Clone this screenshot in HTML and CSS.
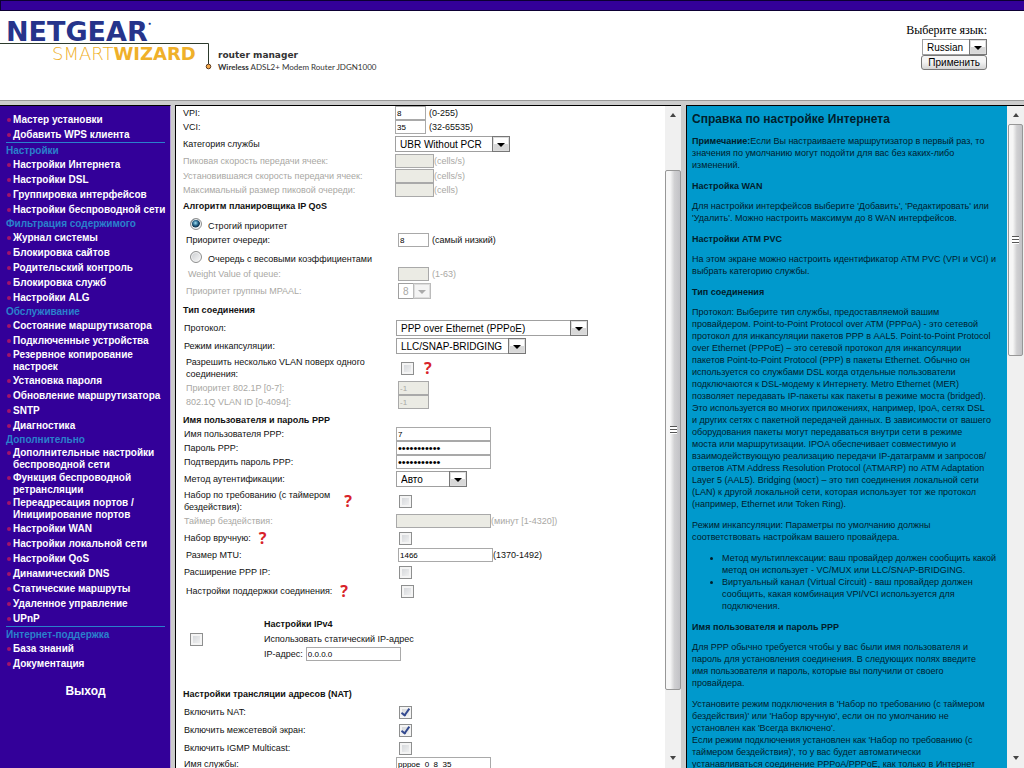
FILE: index.html
```html
<!DOCTYPE html>
<html lang="ru">
<head>
<meta charset="utf-8">
<title>NETGEAR Router JDGN1000</title>
<link rel="stylesheet" href="styles.css">
</head>
<body>
<header class="top">
  <div class="strip"></div>
  <div class="brand-row">
    <div class="brand">
      <div class="logo">
        <div class="netgear">NETGEAR<sup>•</sup></div>
        <div class="wizard">SMART<b>WIZARD</b></div>
        <svg class="logo-line" width="216" height="30" viewBox="0 0 216 30"><path d="M0 1.5H208.500V22" fill="none" stroke="#2c3a2c"/><circle cx="208.500" cy="24.500" r="2.300" fill="#f5a94a" stroke="#5a3a20"/></svg>
      </div>
      <div class="product">
        <div class="manager">router manager</div>
        <div class="model"><b>Wireless</b> ADSL2+ Modem Router JDGN1000</div>
      </div>
    </div>
    <form class="lang">
      <label for="lang">Выберите язык:</label>
      <span class="sel"><select id="lang"><option>Russian</option></select></span>
      <button type="button">Применить</button>
    </form>
  </div>
</header>
<div class="frames">
  <nav class="side">
    <ul>
      <li><a href="#">Мастер установки</a></li>
      <li><a href="#">Добавить WPS клиента</a></li>
    </ul>
    <h2 class="ruled">Настройки</h2>
    <ul>
      <li><a href="#">Настройки Интернета</a></li>
      <li><a href="#">Настройки DSL</a></li>
      <li><a href="#">Группировка интерфейсов</a></li>
      <li><a href="#">Настройки беспроводной сети</a></li>
    </ul>
    <h2>Фильтрация содержимого</h2>
    <ul>
      <li><a href="#">Журнал системы</a></li>
      <li><a href="#">Блокировка сайтов</a></li>
      <li><a href="#">Родительский контроль</a></li>
      <li><a href="#">Блокировка служб</a></li>
      <li><a href="#">Настройки ALG</a></li>
    </ul>
    <h2>Обслуживание</h2>
    <ul>
      <li><a href="#">Состояние маршрутизатора</a></li>
      <li><a href="#">Подключенные устройства</a></li>
      <li class="two"><a href="#">Резервное копирование<br>настроек</a></li>
      <li><a href="#">Установка пароля</a></li>
      <li><a href="#">Обновление маршрутизатора</a></li>
      <li><a href="#">SNTP</a></li>
      <li><a href="#">Диагностика</a></li>
    </ul>
    <h2>Дополнительно</h2>
    <ul>
      <li class="two"><a href="#">Дополнительные настройки<br>беспроводной сети</a></li>
      <li class="two"><a href="#">Функция беспроводной<br>ретрансляции</a></li>
      <li class="two"><a href="#">Переадресация портов /<br>Инициирование портов</a></li>
      <li><a href="#">Настройки WAN</a></li>
      <li><a href="#">Настройки локальной сети</a></li>
      <li><a href="#">Настройки QoS</a></li>
      <li><a href="#">Динамический DNS</a></li>
      <li><a href="#">Статические маршруты</a></li>
      <li><a href="#">Удаленное управление</a></li>
      <li><a href="#">UPnP</a></li>
    </ul>
    <h2 class="ruled">Интернет-поддержка</h2>
    <ul>
      <li><a href="#">База знаний</a></li>
      <li><a href="#">Документация</a></li>
    </ul>
    <a class="exit" href="#">Выход</a>
  </nav>
  <main class="main">
    <form class="form">
      <div class="row h14"><label for="vpi">VPI:</label><div><input id="vpi" class="s" value="8"><span class="u">(0-255)</span></div></div>
      <div class="row h14"><label for="vci">VCI:</label><div><input id="vci" class="s" value="35"><span class="u">(32-65535)</span></div></div>
      <div class="row h20"><label for="cat">Категория службы</label><div><span class="sel w115"><select id="cat"><option>UBR Without PCR</option></select></span></div></div>
      <div class="row h14 off"><label for="pcr">Пиковая скорость передачи ячеек:</label><div><input id="pcr" class="m" disabled>(cells/s)</div></div>
      <div class="row h15 off"><label for="scr">Установившаяся скорость передачи ячеек:</label><div><input id="scr" class="m" disabled>(cells/s)</div></div>
      <div class="row h14 off"><label for="mbs">Максимальный размер пиковой очереди:</label><div><input id="mbs" class="m" disabled>(cells)</div></div>
      <h3 class="h18">Алгоритм планировщика IP QoS</h3>
      <div class="choice h18"><input type="radio" name="qos" id="q1" checked><label for="q1">Строгий приоритет</label></div>
      <div class="row in h14"><label for="qp">Приоритет очереди:</label><div><input id="qp" class="s" value="8"><span class="u">(самый низкий)</span></div></div>
      <div class="choice h20"><input type="radio" name="qos" id="q2"><label for="q2">Очередь с весовыми коэффициентами</label></div>
      <div class="row in h14 off"><label class="deep" for="wv">Weight Value of queue:</label><div><input id="wv" class="s" disabled><span class="u">(1-63)</span></div></div>
      <div class="row in h20 off"><label for="mp">Приоритет группны MPAAL:</label><div><span class="sel w33"><select id="mp" disabled><option>8</option></select></span></div></div>
      <h3 class="h18">Тип соединения</h3>
      <div class="row mid h18"><label for="proto">Протокол:</label><div><span class="sel w192"><select id="proto"><option>PPP over Ethernet (PPPoE)</option></select></span></div></div>
      <div class="row mid h18"><label for="enc">Режим инкапсуляции:</label><div><span class="sel w130"><select id="enc"><option>LLC/SNAP-BRIDGING</option></select></span></div></div>
      <div class="row in h26"><label for="vlan">Разрешить несколько VLAN поверх одного<br>соединения:</label><div><input type="checkbox" id="vlan"><span class="q">?</span></div></div>
      <div class="row in h14 off"><label for="p8">Приоритет 802.1P [0-7]:</label><div><input id="p8" class="s" value="-1" disabled></div></div>
      <div class="row in h14 off"><label for="vid">802.1Q VLAN ID [0-4094]:</label><div><input id="vid" class="s" value="-1" disabled></div></div>
      <h3 class="h18 low">Имя пользователя и пароль PPP</h3>
      <div class="row mid h14"><label for="user">Имя пользователя PPP:</label><div><input id="user" class="l" value="7"></div></div>
      <div class="row mid h14"><label for="pw">Пароль PPP:</label><div><input type="password" id="pw" class="l" value="passwordppp"></div></div>
      <div class="row mid h14"><label for="pw2">Подтвердить пароль PPP:</label><div><input type="password" id="pw2" class="l" value="passwordppp"></div></div>
      <div class="row mid h20"><label for="auth">Метод аутентификации:</label><div><span class="sel w71"><select id="auth"><option>Авто</option></select></span></div></div>
      <div class="row mid h24"><div class="lab"><label for="dod">Набор по требованию (с таймером<br>бездействия):</label><span class="q">?</span></div><div><input type="checkbox" id="dod"></div></div>
      <div class="row mid h15 off"><label for="idle">Таймер бездействия:</label><div><input id="idle" class="l" disabled>(минут [1-4320])</div></div>
      <div class="row mid h20"><div class="lab near"><label for="man">Набор вручную:</label><span class="q">?</span></div><div><input type="checkbox" id="man"></div></div>
      <div class="row in h14"><label for="mtu">Размер MTU:</label><div><input id="mtu" class="l" value="1466">(1370-1492)</div></div>
      <div class="row mid h20"><label for="ext">Расширение PPP IP:</label><div><input type="checkbox" id="ext"></div></div>
      <div class="row in h18"><div class="lab near"><label for="keep">Настройки поддержки соединения:</label><span class="q">?</span></div><div><input type="checkbox" id="keep"></div></div>
      <div class="static">
        <input type="checkbox" id="st">
        <div class="static-body">
          <h3>Настройки IPv4</h3>
          <label for="st">Использовать статический IP-адрес</label>
          <div class="ip"><label for="ip">IP-адрес:</label><input id="ip" class="l" value="0.0.0.0"></div>
        </div>
      </div>
      <h3 class="h18">Настройки трансляции адресов (NAT)</h3>
      <div class="row mid h18"><label for="nat">Включить NAT:</label><div><input type="checkbox" id="nat" checked></div></div>
      <div class="row mid h18"><label for="fw">Включить межсетевой экран:</label><div><input type="checkbox" id="fw" checked></div></div>
      <div class="row mid h18"><label for="igmp">Включить IGMP Multicast:</label><div><input type="checkbox" id="igmp"></div></div>
      <div class="row mid h14"><label for="svc">Имя службы:</label><div><input id="svc" class="l" value="pppoe_0_8_35"></div></div>
    </form>
    <div class="bar"><i class="up"></i><div class="track main-track"><div class="thumb"><i></i></div></div><i class="down"></i></div>
  </main>
  <aside class="help">
    <div class="help-text">
      <h1>Справка по настройке Интернета</h1>
      <p><b>Примечание:</b>Если Вы настраиваете маршрутизатор в первый раз, то<br>значения по умолчанию могут подойти для вас без каких-либо<br>изменений.</p>
      <h4>Настройка WAN</h4>
      <p>Для настройки интерфейсов выберите 'Добавить', 'Редактировать' или<br>'Удалить'. Можно настроить максимум до 8 WAN интерфейсов.</p>
      <h4>Настройки ATM PVC</h4>
      <p>На этом экране можно настроить идентификатор ATM PVC (VPI и VCI) и<br>выбрать категорию службы.</p>
      <h4>Тип соединения</h4>
      <p>Протокол: Выберите тип службы, предоставляемой вашим<br>провайдером. Point-to-Point Protocol over ATM (PPPoA) - это сетевой<br>протокол для инкапсуляции пакетов PPP в AAL5. Point-to-Point Protocol<br>over Ethernet (PPPoE) – это сетевой протокол для инкапсуляции<br>пакетов Point-to-Point Protocol (PPP) в пакеты Ethernet. Обычно он<br>используется со службами DSL когда отдельные пользователи<br>подключаются к DSL-модему к Интернету. Metro Ethernet (MER)<br>позволяет передавать IP-пакеты как пакеты в режиме моста (bridged).<br>Это используется во многих приложениях, например, IpoA, сетях DSL<br>и других сетях с пакетной передачей данных. В зависимости от вашего<br>оборудования пакеты могут передаваться внутри сети в режиме<br>моста или маршрутизации. IPOA обеспечивает совместимую и<br>взаимодействующую реализацию передачи IP-датаграмм и запросов/<br>ответов ATM Address Resolution Protocol (ATMARP) по ATM Adaptation<br>Layer 5 (AAL5). Bridging (мост) – это тип соединения локальной сети<br>(LAN) к другой локальной сети, которая использует тот же протокол<br>(например, Ethernet или Token Ring).</p>
      <p>Режим инкапсуляции: Параметры по умолчанию должны<br>соответствовать настройкам вашего провайдера.</p>
      <ul>
        <li>Метод мультиплексации: ваш провайдер должен сообщить какой<br>метод он использует - VC/MUX или LLC/SNAP-BRIDGING.</li>
        <li>Виртуальный канал (Virtual Circuit) - ваш провайдер должен<br>сообщить, какая комбинация VPI/VCI используется для<br>подключения.</li>
      </ul>
      <h4>Имя пользователя и пароль PPP</h4>
      <p>Для PPP обычно требуется чтобы у вас были имя пользователя и<br>пароль для установления соединения. В следующих полях введите<br>имя пользователя и пароль, которые вы получили от своего<br>провайдера.</p>
      <p>Установите режим подключения в 'Набор по требованию (с таймером<br>бездействия)' или 'Набор вручную', если он по умолчанию не<br>установлен как 'Всегда включено'.<br>Если режим подключения установлен как 'Набор по требованию (с<br>таймером бездействия)', то у вас будет автоматически<br>устанавливаться соединение PPPoA/PPPoE, как только в Интернет</p>
    </div>
    <div class="bar"><i class="up"></i><div class="track help-track"><div class="thumb"><i></i></div></div><i class="down"></i></div>
  </aside>
</div>
</body>
</html>
```
FILE: styles.css
```css
*, *::before, *::after { box-sizing: border-box; }
body {
  margin: 0;
  height: 100vh;
  overflow: hidden;
  display: flex;
  flex-direction: column;
  background: #fff;
  color: #111;
  font: 9px/12px "Liberation Sans", Arial, sans-serif;
}
h1, h2, h3, h4, p, ul { margin: 0; padding: 0; }

/* header */
.top { flex: none; height: 100px; }
.strip { height: 11px; background: #309; border: 1px solid #0c0033; border-right: 0; }
.brand-row { display: flex; justify-content: space-between; padding-right: 37px; }
.brand { display: flex; }
.logo { position: relative; width: 218px; height: 64px; padding-left: 6px; }
.netgear { display: flex; padding-top: 7px; color: #26348b; font: bold 27px/28px "DejaVu Sans", sans-serif; }
.netgear sup { font-size: 6px; line-height: 12px; }
.wizard { padding-left: 46px; color: #efb02a; font: 18px/16px "DejaVu Sans", sans-serif; font-weight: 200; }
.wizard b { font-weight: 700; }
.logo-line { position: absolute; left: 0; top: 31px; }
.product { padding-top: 38px; color: #333; }
.manager { font: bold 9px/12px "DejaVu Sans", sans-serif; }
.model { font: 8px/12px Lato, sans-serif; }
.lang { display: flex; flex-direction: column; align-items: flex-end; padding-top: 11px; }
.lang label { font: 12px/17px "Liberation Serif", serif; color: #000; }
.lang button {
  height: 15px; padding: 0 6px;
  border: 1px solid #777; border-radius: 3px;
  background: linear-gradient(#f4f4f4 45%, #d4d4d4);
  font: 10px/12px "Liberation Sans", sans-serif;
}

/* controls */
input, select, button { margin: 0; color: #000; }
.sel { position: relative; display: flex; height: 16px; }
.sel select {
  appearance: none; width: 100%; height: 16px; padding: 1px 22px 0 4px;
  border: 1px solid #a0a0a0; border-radius: 0; background: #fff;
  font: 10px/13px "Liberation Sans", sans-serif; opacity: 1;
}
.sel::before {
  content: ""; position: absolute; right: 0; top: 0; width: 18px; height: 16px;
  border: 1px solid #777; box-shadow: inset 0 0 0 1px #ddd;
  background: linear-gradient(#fff 50%, #d8d8d8 50%); pointer-events: none;
}
.sel::after {
  content: ""; position: absolute; right: 5px; top: 7px;
  border: 4px solid transparent; border-top-color: #000; border-bottom: 0; pointer-events: none;
}
.off .sel select { color: #a9a8a4; padding-right: 18px; }
.off .sel::before { border-color: #bbb; background: #f4f4f4; }
.off .sel::after { border-top-color: #aaa; }
.w33 { width: 33px; }
.w71 { width: 71px; }
.w115 { width: 115px; }
.w130 { width: 130px; }
.w192 { width: 192px; }
.s, .m, .l {
  height: 14px; padding: 0 1px; border: 1px solid #a9a9a9; border-radius: 0;
  background: #fff; font: 8px/12px "Liberation Sans", sans-serif;
}
.s { width: 31px; }
.m { width: 39px; }
.l { width: 95px; }
.l[type=password] { font-size: 11px; }
.s:disabled, .m:disabled, .l:disabled { background: #ebebe4; color: #a9a8a4; }
.u { padding-left: 3px; }
input[type=checkbox] {
  appearance: none; width: 13px; height: 13px; margin-left: 3px;
  border: 1px solid #8e8f8f; background: linear-gradient(135deg, #cfd2d6, #f6f6f6);
  box-shadow: inset 0 0 0 2px #f4f4f4; display: grid; place-items: center;
}
input[type=checkbox]:checked::after {
  content: ""; width: 5px; height: 9px; margin-bottom: 2px;
  border: solid #33498f; border-width: 0 2px 2px 0; transform: rotate(35deg);
}
input[type=radio] {
  appearance: none; width: 12px; height: 12px; border: 1px solid #8e8f8f; border-radius: 50%;
  background: linear-gradient(135deg, #c8cbce, #fafafa); box-shadow: inset 0 0 0 1px #f4f4f4;
}
input[type=radio]:checked { background: radial-gradient(circle at 45% 40%, #9fe0f5 0, #1c5a80 35%, #12344f 50%, #e8eef2 60%); }

/* frames */
.frames { flex: 1; min-height: 0; display: flex; border-top: 1px solid #999; background: #ccc; }
.side, .main, .help { margin-top: 4px; border-top: 1px solid #000; }
.side { flex: none; width: 171px; padding: 6px 0 0 6px; background: #309; border-right: 1px solid #b39ddb; overflow: hidden; }
.main { flex: 1; min-width: 0; display: flex; margin-left: 4px; border-left: 1px solid #000; background: #fff; }
.help { flex: none; width: 33%; display: flex; margin-left: 5px; border-left: 1px solid #000; background: #09c; }

/* sidebar */
.side ul { list-style: none; }
.side li { display: flex; align-items: center; height: 15px; white-space: nowrap; }
.side li.two { height: 25px; }
.side li::before { content: ""; flex: none; width: 4px; height: 4px; margin: 0 2px 0 1px; border-radius: 50%; background: #a3126b; }
.side li.two::before { margin-bottom: 11px; }
.side a { color: #fff; font-weight: bold; font-size: 10px; text-decoration: none; }
.side h2 { height: 13px; color: #2a80cc; font-size: 10px; line-height: 13px; }
.side .ruled { height: 15px; margin-right: 5px; padding-top: 1px; border-top: 1px solid #2a80cc; }
.side .exit { display: block; padding: 13px 5px 0 0; font-size: 12px; line-height: 14px; text-align: center; }

/* form */
.form { flex: 1; min-width: 0; overflow: hidden; padding-left: 7px; }
.row { display: grid; grid-template-columns: 212px 1fr; align-items: center; white-space: nowrap; }
.row > div { display: flex; align-items: center; }
.row.mid { padding-left: 1px; }
.row.in { padding-left: 3px; }
.deep { padding-left: 2px; }
.off { color: #a9a8a4; }
.h14 { height: 14px; }
.h15 { height: 15px; }
.h18 { height: 18px; }
.h20 { height: 20px; }
.h24 { height: 24px; }
.h26 { height: 26px; }
.form h3 { font-size: 9px; line-height: 18px; }
.form .low { line-height: 22px; }
.choice { display: flex; align-items: center; gap: 6px; padding-left: 7px; }
.choice label { padding-top: 4px; }
.q { color: #d8232a; font: bold 16px/16px "Noto Sans", sans-serif; padding-left: 10px; }
.lab .q { padding-left: 14px; }
.lab.near .q { padding-left: 8px; }
.static { display: flex; align-items: center; height: 78px; margin-bottom: 7px; padding-left: 4px; }
.static-body { display: flex; flex-direction: column; gap: 2px; padding-left: 61px; }
.static-body h3 { line-height: 14px; }
.ip { display: flex; align-items: center; gap: 3px; }

/* help */
.help-text { flex: 1; min-width: 0; overflow: hidden; padding: 6px 0 0 5px; color: #00202c; white-space: nowrap; }
.help h1 { font-size: 12px; line-height: 14px; margin-bottom: 9px; }
.help p, .help ul { margin-bottom: 9px; }
.help h4 { margin-bottom: 8px; font-size: 9px; line-height: 12px; }
.help ul { padding-left: 30px; }

/* scroll bars */
.bar { flex: none; width: 16px; display: flex; flex-direction: column; align-items: center; background: #f0f0f0; padding: 7px 0 8px; }
.help .bar { width: 17px; }
.up, .down { border: 3px solid transparent; }
.up { border-bottom: 4px solid #444; border-top: 0; }
.down { border-top: 4px solid #444; border-bottom: 0; }
.track { flex: 1; width: 100%; display: flex; flex-direction: column; }
.main-track { padding: 53px 0 66px; }
.help-track { padding: 7px 1px 400px; }
.thumb {
  flex: 1; display: grid; place-items: center;
  border: 1px solid #979797; border-radius: 2px;
  background: linear-gradient(90deg, #f6f6f6 30%, #d0d0d2 60%, #c2c2c6);
}
.thumb i { width: 7px; height: 8px; background: repeating-linear-gradient(#555 0 1px, #fff 1px 3px); }
```
